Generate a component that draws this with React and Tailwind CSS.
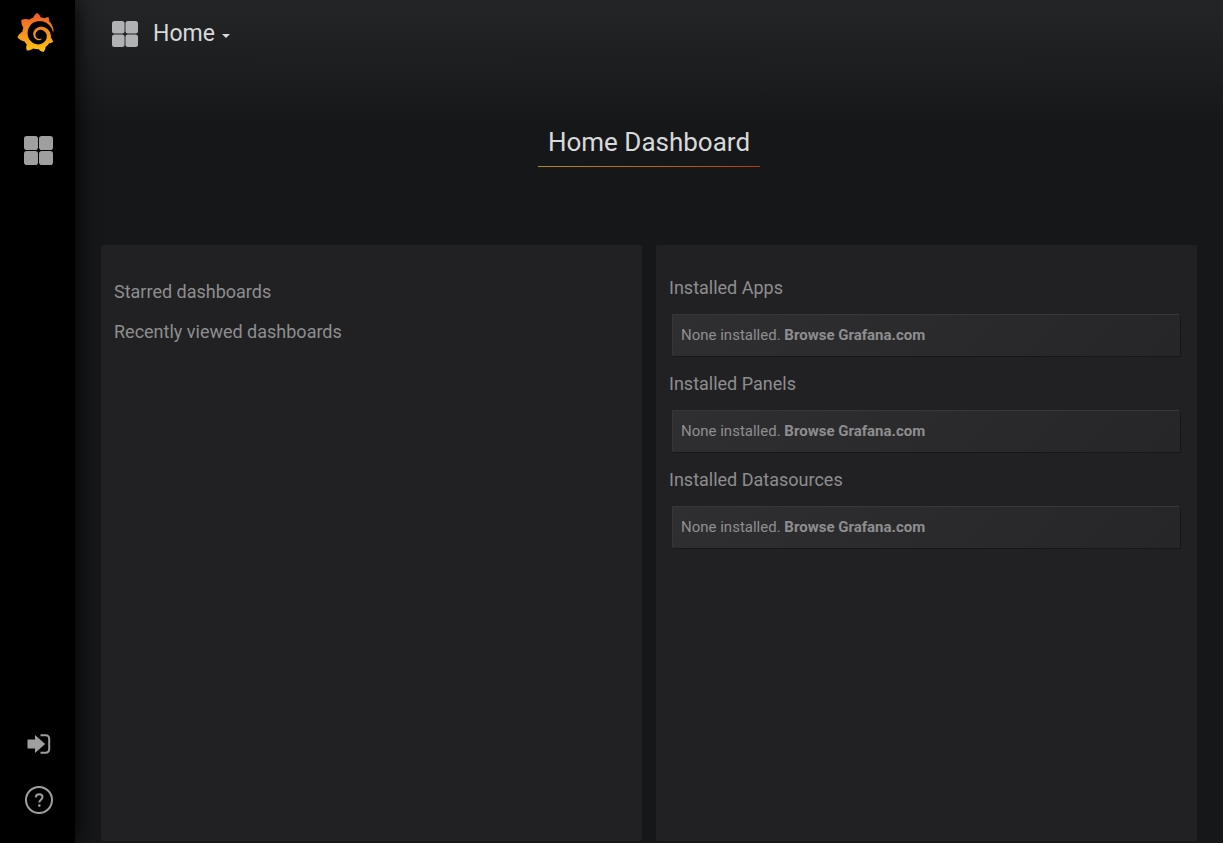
import { useId } from "react";
import { SiGrafana } from "react-icons/si";

function DashboardIcon({ className }) {
  return (
    <svg viewBox="0 0 29 29" fill="currentColor" aria-hidden="true" className={className}>
      <rect x="0" y="0" width="14" height="14" rx="2.800" />
      <rect x="15" y="0" width="14" height="14" rx="2.800" />
      <rect x="0" y="15" width="14" height="14" rx="2.800" />
      <rect x="15" y="15" width="14" height="14" rx="2.800" />
    </svg>
  );
}

function SignInIcon() {
  return (
    <svg viewBox="0 0 24 20" aria-hidden="true" className="h-5 w-6">
      <path d="M0.500 5.500h7.500V1l10.200 9-10.200 9v-4.500H0.500z" fill="currentColor" />
      <path d="M13.500 1.300h5.300a3.400 3.400 0 0 1 3.400 3.400v10.600a3.400 3.400 0 0 1-3.400 3.400h-5.300" fill="none" stroke="currentColor" strokeWidth="2" />
    </svg>
  );
}

function HelpIcon() {
  return (
    <svg viewBox="0 0 28 28" aria-hidden="true" className="size-7" fill="none" stroke="currentColor">
      <circle cx="14" cy="14" r="13" strokeWidth="2" />
      <path d="M10.8 11.4c.1-2 1.400-3.200 3.400-3.200 2 0 3.300 1.100 3.300 2.800 0 2.600-3.200 2.700-3.200 5.500" strokeWidth="2" />
      <circle cx="14.300" cy="19.600" r="1.300" fill="currentColor" stroke="none" />
    </svg>
  );
}

function Logo() {
  const id = useId();
  return (
    <a href="#home" aria-label="Grafana" className="mr-[5px]">
      <svg width="0" height="0" className="absolute" aria-hidden="true">
        <linearGradient id={id} x1="0" y1="1" x2="0" y2="0">
          <stop offset="0" stopColor="#fcc80f" />
          <stop offset="0.2" stopColor="#fcb017" />
          <stop offset="1" stopColor="#f05a28" />
        </linearGradient>
      </svg>
      <SiGrafana size={39} style={{ fill: `url(#${id})` }} />
    </a>
  );
}

function PluginSection({ title }) {
  return (
    <section>
      <h2 className="text-lg leading-6">{title}</h2>
      <div className="mx-1 mt-[15px] mb-4 bg-linear-135 from-[#2f2f32] to-[#262628] px-2 py-[10px] text-[15px] leading-[21px] shadow-[-1px_-1px_0_0_rgba(255,255,255,0.1),1px_1px_0_0_rgba(0,0,0,0.3)]">
        None installed.{" "}
        <a href="#plugins" className="font-bold">
          Browse Grafana.com
        </a>
      </div>
    </section>
  );
}

export default function App() {
  return (
    <div className="flex min-h-screen bg-[#161719] font-[Roboto,sans-serif] text-[#8e8e8e]">
      <nav className="relative z-10 flex w-[75px] shrink-0 flex-col items-center bg-black pt-[13px] pb-[29px] text-[#9f9f9f] shadow-[0_0_25px_black]">
        <Logo />
        <a href="#dashboards" aria-label="Dashboards" className="mt-[84px] ml-0.5">
          <DashboardIcon className="size-[29px]" />
        </a>
        <a href="#login" aria-label="Sign in" className="mt-auto ml-0.5">
          <SignInIcon />
        </a>
        <a href="#help" aria-label="Help" className="mt-8 ml-[3px]">
          <HelpIcon />
        </a>
      </nav>

      <main className="flex min-w-0 flex-1 flex-col bg-[linear-gradient(180deg,#222426_12px,#161719_125px)] px-[26px] pb-0.5">
        <header className="flex h-[68px] items-center pl-[11px]">
          <button type="button" className="flex items-center text-[23px] leading-8 text-[#d8d9da]">
            <DashboardIcon className="mr-[15px] size-[26px] text-[#b1b2b3]" />
            Home
            <svg viewBox="0 0 8 4" className="mt-1 ml-[7px] h-1 w-2" fill="currentColor" aria-hidden="true">
              <path d="M0 0h8L4 4z" />
            </svg>
          </button>
        </header>

        <div className="mt-14 mb-[78px] self-center">
          <h1 className="px-[10px] pb-[5px] text-[26px] leading-[37px] text-[#d8d9da]">Home Dashboard</h1>
          <div className="h-px bg-linear-to-r from-[#b48c10] to-[#b03c0e]" />
        </div>

        <div className="grid flex-1 grid-cols-2 gap-[14px]">
          <section className="flex flex-col gap-4 rounded-xs bg-[#212124] px-[13px] pt-[35px]">
            <h2 className="text-lg leading-6">Starred dashboards</h2>
            <h2 className="text-lg leading-6">Recently viewed dashboards</h2>
          </section>
          <section className="rounded-xs bg-[#212124] px-[13px] pt-[31px]">
            <PluginSection title="Installed Apps" />
            <PluginSection title="Installed Panels" />
            <PluginSection title="Installed Datasources" />
          </section>
        </div>
      </main>
    </div>
  );
}
